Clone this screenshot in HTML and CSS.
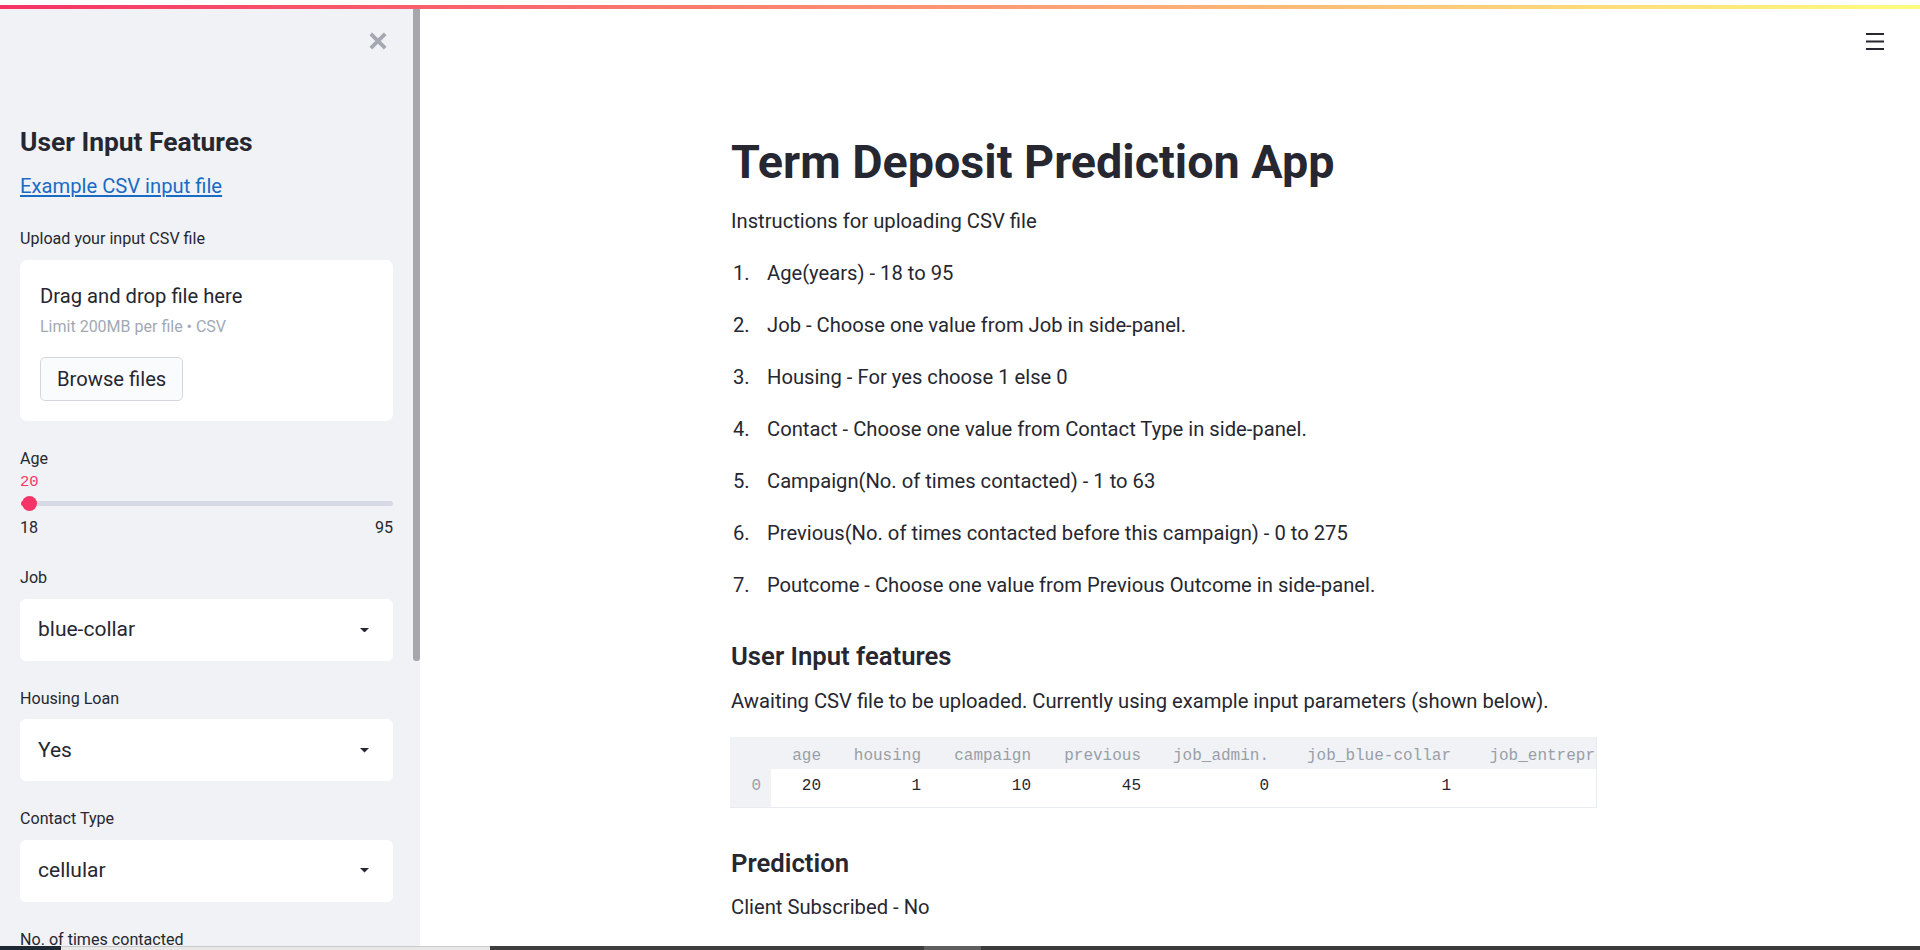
FILE: index.html
```html
<!DOCTYPE html>
<html lang="en">
<head>
<meta charset="utf-8">
<title>Term Deposit Prediction App</title>
<link rel="stylesheet" href="styles.css">
</head>
<body>
<div class="chrome-top"></div>
<div class="decoration"></div>
<div class="app">
  <aside class="sidebar">
    <div class="sb-inner">
      <div class="sb-top">
        <svg class="close-icon" viewBox="0 0 18 18" aria-label="Close sidebar"><path d="M1.8 1.8 L16.2 16.2 M16.2 1.8 L1.8 16.2" stroke="#a4a8b2" stroke-width="3.8" fill="none"/></svg>
      </div>
      <h2 class="sb-title">User Input Features</h2>
      <p class="sb-p"><a href="#">Example CSV input file</a></p>

      <div class="field field-upload">
        <div class="label">Upload your input CSV file</div>
        <div class="dropzone">
          <div class="dz-title">Drag and drop file here</div>
          <div class="dz-limit">Limit 200MB per file • CSV</div>
          <button class="browse" type="button">Browse files</button>
        </div>
      </div>

      <div class="field field-age">
        <div class="label tight">Age</div>
        <div class="slider-value">20</div>
        <div class="slider">
          <div class="track"><div class="fill"></div></div>
          <div class="thumb"></div>
        </div>
        <div class="slider-range"><span>18</span><span>95</span></div>
      </div>

      <div class="field">
        <div class="label">Job</div>
        <div class="select"><span>blue-collar</span><svg class="caret" viewBox="0 0 10 5"><path d="M0 0 H10 L5 5 Z" fill="#262730"/></svg></div>
      </div>

      <div class="field">
        <div class="label">Housing Loan</div>
        <div class="select"><span>Yes</span><svg class="caret" viewBox="0 0 10 5"><path d="M0 0 H10 L5 5 Z" fill="#262730"/></svg></div>
      </div>

      <div class="field">
        <div class="label">Contact Type</div>
        <div class="select"><span>cellular</span><svg class="caret" viewBox="0 0 10 5"><path d="M0 0 H10 L5 5 Z" fill="#262730"/></svg></div>
      </div>

      <div class="field">
        <div class="label">No. of times contacted</div>
      </div>
    </div>
    <div class="sb-scrollbar"><div class="sb-thumb"></div></div>
  </aside>

  <main class="main">
    <div class="toolbar">
      <svg class="menu-icon" viewBox="0 0 18 17" aria-label="Menu"><rect x="0" y="0" width="18" height="2" fill="#262730"/><rect x="0" y="7.5" width="18" height="2" fill="#262730"/><rect x="0" y="15" width="18" height="2" fill="#262730"/></svg>
    </div>
    <div class="block">
      <h1 class="title">Term Deposit Prediction App</h1>
      <p class="intro">Instructions for uploading CSV file</p>
      <ol class="steps">
        <li>Age(years) - 18 to 95</li>
        <li>Job - Choose one value from Job in side-panel.</li>
        <li>Housing - For yes choose 1 else 0</li>
        <li>Contact - Choose one value from Contact Type in side-panel.</li>
        <li>Campaign(No. of times contacted) - 1 to 63</li>
        <li>Previous(No. of times contacted before this campaign) - 0 to 275</li>
        <li>Poutcome - Choose one value from Previous Outcome in side-panel.</li>
      </ol>

      <h3 class="section">User Input features</h3>
      <p class="desc">Awaiting CSV file to be uploaded. Currently using example input parameters (shown below).</p>

      <div class="df">
        <table>
          <colgroup>
            <col class="w-idx"><col class="w-age"><col class="w-housing"><col class="w-campaign"><col class="w-previous"><col class="w-admin"><col class="w-blue"><col class="w-entre"><col class="w-more">
          </colgroup>
          <thead>
            <tr><th class="idx"></th><th>age</th><th>housing</th><th>campaign</th><th>previous</th><th>job_admin.</th><th>job_blue-collar</th><th>job_entrepreneur</th><th>job_housemaid</th></tr>
          </thead>
          <tbody>
            <tr><td class="idx">0</td><td>20</td><td>1</td><td>10</td><td>45</td><td>0</td><td>1</td><td>0</td><td>0</td></tr>
          </tbody>
        </table>
      </div>

      <h3 class="section pred">Prediction</h3>
      <p class="desc">Client Subscribed - No</p>
    </div>
  </main>
</div>
<div class="taskbar">
  <div class="tb tb-a"></div>
  <div class="tb tb-b"></div>
  <div class="tb tb-c"></div>
  <div class="tb tb-d"></div>
  <div class="tb tb-e"></div>
</div>
</body>
</html>
```
FILE: styles.css
```css
html, body {
  margin: 0;
  padding: 0;
}
body {
  height: 950px;
  overflow: hidden;
  display: flex;
  flex-direction: column;
  background: #ffffff;
  color: #262730;
  font-family: Roboto, "Liberation Sans", sans-serif;
}

.chrome-top {
  height: 5px;
  flex: none;
  background: #ffffff;
}
.decoration {
  height: 4px;
  flex: none;
  background: linear-gradient(90deg, #f63366, #fffd80);
}

.app {
  height: 937px;
  flex: none;
  display: flex;
  overflow: hidden;
}

/* ---------- Sidebar ---------- */
.sidebar {
  width: 420px;
  flex: none;
  display: flex;
  background: #f0f2f6;
}
.sb-inner {
  width: 413px;
  box-sizing: border-box;
  padding: 0 20px;
  overflow: hidden;
}
.sb-scrollbar {
  width: 7px;
  flex: none;
}
.sb-thumb {
  height: 652px;
  background: #a6a7ad;
  border-radius: 0 0 3px 3px;
}
.sb-top {
  display: flex;
  justify-content: flex-end;
  padding-top: 23px;
  padding-right: 6px;
}
.close-icon {
  width: 18px;
  height: 18px;
  display: block;
}
.sb-title {
  margin: 77px 0 0;
  font-size: 26.4px;
  line-height: 31.7px;
  font-weight: 700;
}
.sb-p {
  margin: 12.3px 0 0;
  font-size: 20.2px;
  line-height: 30.3px;
}
.sb-p a {
  color: #1a6bc4;
  text-decoration: underline;
}

.field {
  margin-top: 25.8px;
}
.field-upload {
  margin-top: 26.1px;
}
.field-age {
  margin-top: 26.4px;
}
.label {
  font-size: 16.1px;
  line-height: 24.15px;
  margin-bottom: 8.45px;
}
.label.tight {
  margin-bottom: 0;
}

.dropzone {
  background: #ffffff;
  border-radius: 7px;
  padding: 21px 20px 20px;
}
.dz-title {
  font-size: 20.2px;
  line-height: 30.3px;
}
.dz-limit {
  margin-top: 3.8px;
  font-size: 16px;
  line-height: 23.25px;
  color: #a3a8b4;
}
.browse {
  display: block;
  margin-top: 18.65px;
  height: 44px;
  padding: 0 16px;
  border: 1px solid #d4d7de;
  border-radius: 5px;
  background: #fafbfc;
  color: #262730;
  font-family: Roboto, "Liberation Sans", sans-serif;
  font-size: 20.2px;
  line-height: 30.3px;
}

.slider-value {
  font-family: "Liberation Mono", monospace;
  font-size: 15.5px;
  line-height: 21px;
  color: #f63366;
}
.slider {
  position: relative;
  height: 22px;
  display: flex;
  align-items: center;
}
.track {
  flex: 1;
  height: 5px;
  margin-left: 1px;
  background: #d5dae4;
  border-radius: 3px;
  display: flex;
}
.fill {
  width: 9px;
  background: #f63366;
  border-radius: 3px 0 0 3px;
}
.thumb {
  position: absolute;
  left: 2px;
  top: 3.5px;
  width: 15px;
  height: 15px;
  border-radius: 50%;
  background: #f63366;
}
.slider-range {
  display: flex;
  justify-content: space-between;
  margin-top: 1.9px;
  font-size: 16.1px;
  line-height: 24.15px;
}

.select {
  height: 62px;
  box-sizing: border-box;
  background: #ffffff;
  border-radius: 6px;
  display: flex;
  align-items: center;
  justify-content: space-between;
  padding: 0 24px 0 18px;
  font-size: 21px;
  line-height: 31.5px;
}
.caret {
  width: 9px;
  height: 4.5px;
  display: block;
}

/* ---------- Main ---------- */
.main {
  flex: 1;
  min-width: 0;
  display: flex;
  flex-direction: column;
  padding-right: 12px;
}
.toolbar {
  display: flex;
  justify-content: flex-end;
  padding-top: 24px;
  padding-right: 24px;
}
.menu-icon {
  width: 18px;
  height: 17px;
  display: block;
}
.block {
  width: 866px;
  margin: 0 auto;
  padding-top: 84px;
}
.title {
  margin: 0;
  font-size: 46.7px;
  line-height: 56px;
  font-weight: 700;
}
.intro {
  margin: 16px 0 0;
  font-size: 20.2px;
  line-height: 30.3px;
}
.steps {
  list-style: none;
  margin: 0;
  padding: 0;
  counter-reset: step;
}
.steps li {
  counter-increment: step;
  display: flex;
  margin-top: 21.7px;
  font-size: 20.2px;
  line-height: 30.3px;
}
.steps li::before {
  content: counter(step) ".";
  flex: none;
  width: 36px;
  box-sizing: border-box;
  padding-left: 2px;
}
.section {
  margin: 40.5px 0 0;
  font-size: 25.7px;
  line-height: 30.84px;
  font-weight: 600;
}
.section.pred {
  margin-top: 40px;
}
.desc {
  margin: 14.3px 0 0;
  font-size: 20.2px;
  line-height: 30.3px;
}
.pred + .desc {
  margin-top: 13.4px;
}

.df {
  margin-top: 20.7px;
  margin-left: -1px;
  width: 867px;
  box-sizing: border-box;
  border: 1px solid #e8ebf0;
  border-left: none;
  border-top: none;
  overflow: hidden;
}
.df table {
  border-collapse: collapse;
  table-layout: fixed;
  width: 1093px;
  font-family: "Liberation Mono", monospace;
  font-size: 16px;
}
.w-idx { width: 41px; }
.w-age { width: 60px; }
.w-housing { width: 100px; }
.w-campaign { width: 110px; }
.w-previous { width: 110px; }
.w-admin { width: 128px; }
.w-blue { width: 182px; }
.w-entre { width: 192px; }
.w-more { width: 170px; }
.df th {
  padding: 9.7px 10px 4.2px 0;
  line-height: 18.1px;
  text-align: right;
  font-weight: 400;
  color: #9a9ea6;
  background: #f0f2f6;
  white-space: nowrap;
  overflow: hidden;
}
.df td {
  padding: 8.4px 10px 11.5px 0;
  line-height: 18.1px;
  text-align: right;
  color: #262730;
  background: #ffffff;
  white-space: nowrap;
}
.df td.idx {
  background: #f0f2f6;
  color: #9a9ea6;
}

/* ---------- Bottom bar ---------- */
.taskbar {
  height: 4px;
  flex: none;
  display: flex;
}
.tb-a { width: 61px; background: #1f2933; }
.tb-b { width: 429px; background: #e8e8e8; border-top: 1px solid #c9c9c9; box-sizing: border-box; }
.tb-c { width: 434px; background: #3e3e3e; }
.tb-d { width: 57px; background: #5e5e5e; }
.tb-e { flex: 1; background: #3b3b3b; }
```
